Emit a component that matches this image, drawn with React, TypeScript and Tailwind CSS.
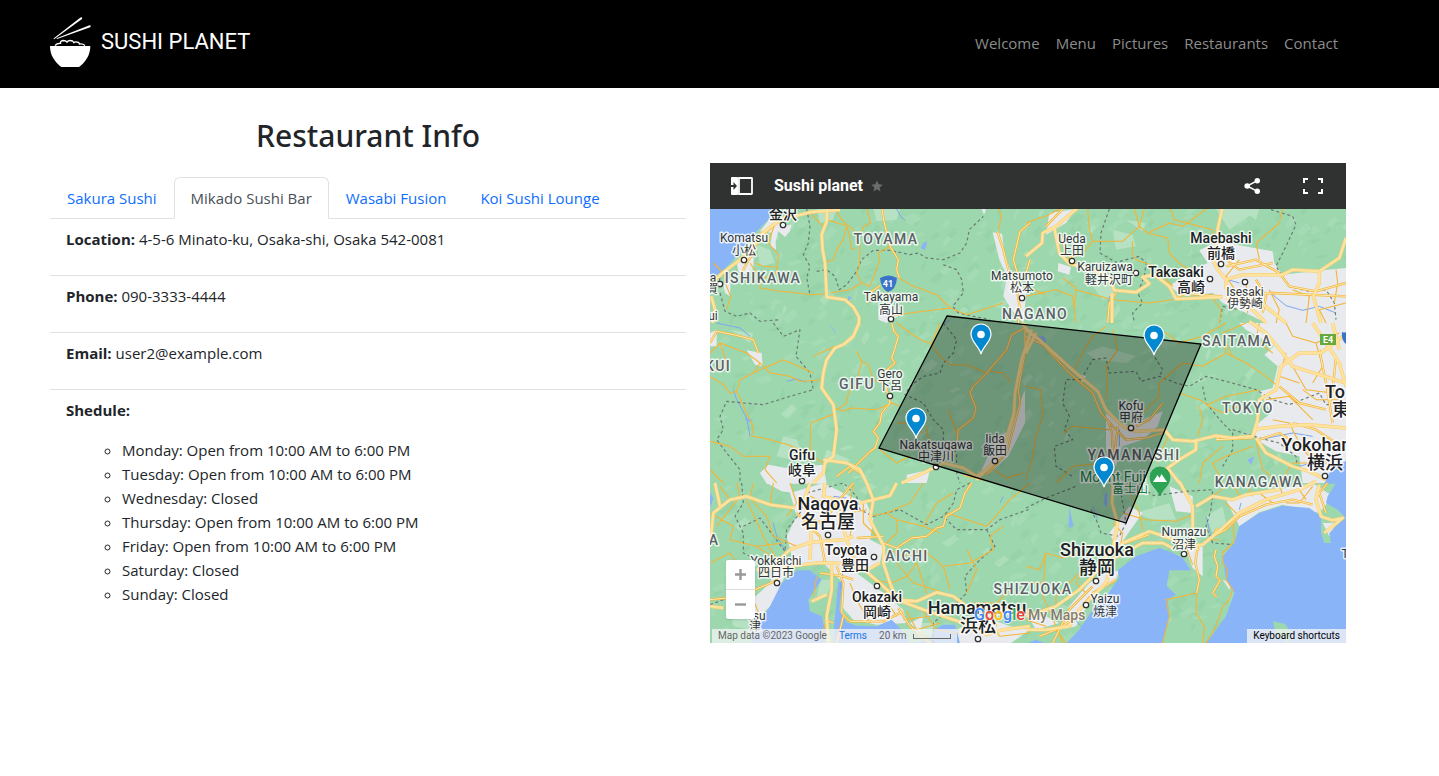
import { useState } from "react";

/* ---------- Map drawing data: each sheet covers 320x160 map units at 3x ---------- */

type Sheet = {
  x: number;
  y: number;
  water: string;
  urban: string;
  pale: string;
  major: string;
  medium: string;
  minor: string;
  border: string;
  river: string;
};

const sheets: Sheet[] = [
  {
    x: 0,
    y: -46,
    water: "M0 130H197L180 165L140 205L100 250L70 290L40 322L0 350ZM640 240L652 235L645 262L632 255ZM415 400L425 402L412 420Z",
    urban:
      "M185 160L215 190L245 185L240 205L225 222L205 205L197 235L198 260L182 250L186 210L150 205ZM100 270L132 285L128 320L110 335L85 325L80 300ZM848 208L876 212L884 275L905 330L890 335L868 290ZM505 430L545 425L565 460L530 480L505 470ZM890 345L950 380L940 480L905 440L880 400ZM40 365L62 350L60 400L45 390ZM812 130L828 140L822 155Z",
    pale: "M320 138L380 138L370 170L330 180ZM490 138L570 138L560 170L500 175ZM140 245L180 260L195 300L150 310Z",
    major:
      "M0 365L40 328L80 298L118 268L148 218L195 182L232 160L260 158L300 148L390 140M352 130L350 175L335 215L338 260L345 300L348 360L350 402L405 410L430 432L447 462L447 482M4 400L15 440L8 480",
    medium:
      "M125 265L160 215L205 175M95 330L110 300L130 270M515 130L522 175L530 210L540 250L565 290L560 320L568 345M470 420L485 385L510 368M862 205L880 260L895 320L920 370L930 440L925 480M960 180L930 205L910 290L925 340M960 290L945 340",
    minor:
      "M205 138L200 170L185 210L175 240L205 275L200 330L150 350L150 375L210 385L245 388L300 395L350 392M300 150L340 190M350 170L400 185L410 190L400 230L380 260L370 290L348 298M380 148L400 175L430 200L450 240L448 310L440 330L455 360L420 380L360 390M470 138L482 180L462 190L450 215M410 190L418 215L425 260L435 255M455 360L480 370L510 290L505 270L540 250M568 345L600 365L680 395L720 435L770 455L880 420M720 435L600 450L545 460M865 138L875 155L865 200M135 300L160 310L200 312M530 375L535 400M120 300L150 345M10 300L40 330L50 370L62 400L50 440",
    border:
      "M290 138L300 190L295 240L280 275L300 310L290 345L300 395M320 325L350 320L375 340L388 380L410 365L440 325L455 290L490 262L540 262L600 275L625 270L650 285L700 290L750 270L770 240L778 200L820 160M700 305L740 320L755 350L760 390L728 430L745 450L800 462L840 470M30 390L45 445L80 460L120 450L150 475L210 470M30 345L25 370",
    river: "M560 138L575 165L585 170M720 470L705 480",
  },
  {
    x: 316,
    y: -46,
    water: "",
    urban:
      "M520 262L565 240L605 240L740 265L745 300L770 335L860 325L960 315V480H720L640 440L590 420L560 390L470 400L430 370L500 320L545 300ZM70 150L150 138L120 180L60 215ZM97 300L135 312L130 335L95 325Z",
    pale: "M260 200L320 215L330 250L270 260ZM300 170L360 180L350 205ZM200 370L250 360L270 400L230 410ZM640 138L700 138L690 170ZM570 138L700 138L610 200Z",
    major:
      "M160 130L90 190L50 210L48 240L0 280M85 195L100 270L130 302L200 320L250 345L265 382L330 388L370 362L350 342L385 335L430 370L450 408L590 402M560 290L575 320L600 350L600 375L660 420L720 480M570 270L575 200L590 130M600 350L650 335L770 335L800 320L880 325L940 285L960 225M880 325L880 360L862 400L885 480M600 405L700 415L780 480M258 390L258 480",
    medium:
      "M600 310L690 290L760 330L790 370L870 385L960 360M105 215L120 270L150 300M60 190L110 138M455 400L480 392L590 400M690 350L720 400L710 450M245 480L250 420L270 390M600 290L640 320L740 300M650 400L740 390L960 400",
    minor:
      "M0 180L40 165L60 160L100 138M185 138L190 200L200 235L290 235L340 190L325 138M340 190L355 140M340 190L365 210L430 180L470 190L540 138M365 210L425 225L430 270L470 310L500 320M200 235L170 270L120 290M0 400L90 380L140 400L150 480M150 380L260 410L370 420L440 410M320 235L318 270L330 290L385 310L440 370M690 240L760 180L770 138M690 240L700 290M435 138L445 170L560 200L565 240M110 345L150 375L145 440M0 370L60 395M800 380L850 400L840 480M660 350L665 450M730 380L760 440L750 480M640 400L600 340L640 290M900 480L880 440L960 420M560 400L570 420L585 440L580 480M930 320L935 360L925 420",
    border:
      "M250 138L225 210L222 270L270 298L340 280L360 300L355 340L335 390L350 420L320 450L325 480M735 140L800 160L810 185L780 250L750 310L790 370L850 385L900 380L925 420L930 470M580 480L590 430L640 440",
    river: "M605 350L640 360M740 395L780 428L830 442L880 430L930 450M250 400L245 470",
  },
  {
    x: 0,
    y: 114,
    water: "M100 285L130 290L118 298ZM355 0L372 20L380 38L362 10Z",
    urban:
      "M150 450L175 425L230 435L340 425L350 482H170ZM110 82L155 90L158 130L135 125ZM860 345L900 320L925 250L945 200L945 300L895 400L840 450L815 440ZM590 455L660 440L650 480H590ZM0 30L20 20L20 70H0Z",
    pale: "M60 20L130 30L120 60ZM350 380L420 410L410 425L340 415ZM220 340L260 350L290 420L200 400Z",
    major:
      "M447 0L430 40L400 65L375 75L350 110L340 150L335 195L370 245L380 320L370 400L345 420L340 450L310 480M340 410L410 420L450 440L470 480M575 480L640 450L700 420L760 435L800 460L835 435M965 20L935 110L915 210L912 270L885 360L840 430L800 470M935 0L960 30",
    medium:
      "M545 0L552 25L565 40L555 75L545 105L555 120L525 145L520 170L530 200L540 240L515 270L510 300L490 325L505 345L495 375L475 390L445 420L415 450M945 15L905 35L890 80L830 150L790 190L780 210L798 255L790 285L745 320L740 365L715 400M0 60L20 25L70 35L130 50L145 90M945 0V90L925 200L930 240L890 390L830 455M380 460L420 430L450 450M760 455L820 470",
    minor:
      "M0 90L30 60L110 90L150 120L130 150L90 170L80 205L60 210L40 185L0 160M150 120L180 150L240 160L270 175L330 172M80 205L110 270L130 310L125 340L160 345L235 365L300 395M300 395L302 300L380 270M380 255L400 265L425 255L500 260L545 240L570 250M440 85L455 115L440 180L415 210L410 240L380 260M455 115L475 125L490 170L520 180M560 0L600 30L640 55L660 60L690 100L720 125L770 125L830 150M650 310L655 350L670 385M560 300L600 300L640 330M0 355L60 370L100 400L180 400L165 440L200 480M840 145L880 150L905 180M30 60L50 120L0 145M310 100L375 70M130 150L220 110L310 150M510 380L560 420L600 400M740 330L715 260M0 440L40 480M300 395L340 420M850 440L890 465L940 450M690 0L665 60",
    border:
      "M190 0L220 40L270 20L258 100L300 150L310 200L240 220L160 245L100 240L50 235L30 280L40 320L20 350L50 390L90 440L90 480M700 0L740 50L730 90L700 120L690 150L640 160L600 190L585 215L640 240L670 290L700 320L700 350L740 390L740 450L750 480",
    river: "M230 175L260 168L290 178M20 0L90 15L120 40M70 200L80 230L110 285L120 340",
  },
  {
    x: 316,
    y: 114,
    water: "M895 482L910 450L935 430L965 410V482ZM0 40L55 40L60 60L40 65ZM665 410L685 400L675 425Z",
    urban:
      "M640 0H960V430L920 450L900 480H830L820 400L750 385L690 350L685 310L735 270L700 205L740 195L755 130L715 95L745 70L660 20ZM240 270L265 290L310 310L350 290L410 265L395 310L350 350L290 370L270 430L240 380ZM150 150L180 160L170 180Z",
    pale: "M720 60L770 40L780 90L735 95ZM750 230L800 240L780 260L750 255ZM180 90L230 70L330 100L300 120L210 110Z",
    major:
      "M0 20L40 50L100 105L150 150L215 205L240 260L290 310L330 325L415 320L440 350L500 355L570 338L620 345L680 340L690 318L760 310L850 305L960 315M680 340L695 290L700 230L750 200L765 130L820 90L885 90L965 30M670 -5L720 30L770 90L800 130L960 180M510 350L510 380L460 410L425 435L460 480M690 345L720 390L800 430L850 445L900 470M940 80L920 0M860 0L900 60L940 120L960 190M0 90L30 30",
    medium:
      "M0 40L50 65L130 150L200 210L225 270L270 320L300 350L360 345L410 330M245 290L258 330L260 400L262 480M275 310L265 400M330 310L370 290L410 240M570 350L680 345M700 350L760 330L840 380L900 420M800 300L870 320L960 380M760 190L820 240L900 260M560 335L580 350M880 80L900 180L920 300M930 100L920 200L910 250",
    minor:
      "M0 190L45 200L50 280L30 340L20 400L0 470M140 150L180 70L200 40L240 10M260 20L275 80L240 130L245 170L240 230M300 320L400 220L400 180L470 120L530 130M390 10L460 60L530 40L600 0M530 130L600 90L660 120L720 160L750 185M600 90L590 30L660 0M460 210L520 230L545 245L600 220L650 210L700 200M520 250L530 290L515 340M540 245L590 270L640 250M430 330L400 400L395 420M620 100L600 60M780 90L760 160L820 180M780 0L800 40L870 60L940 30M800 130L840 200L920 210M720 230L790 220L860 290M740 290L790 300L830 380L890 440M690 350L710 440L760 480M590 480L560 420L600 400L680 370M760 480L800 420L860 420M890 160L910 160M700 0L690 50L740 90M110 330L140 310L250 320M90 480L140 430L230 420M830 200L870 230L940 230M870 60L890 130L860 180M520 480L530 420L590 370",
    border:
      "M165 170L200 110L240 105L250 150L330 145L345 175L400 160L450 180L490 190L540 160L600 175L690 200L740 230L790 245L880 210L900 245L950 240M530 190L540 240L590 300L620 330L620 380L590 430M165 170L120 170L110 240L130 280L115 320L140 350L85 370L90 430L140 460M620 320L700 345L760 360L810 400L815 440M380 70L385 100L410 140L400 160",
    river: "M700 350L800 330L860 340M280 320V370M820 430L890 410",
  },
  {
    x: 0,
    y: 274,
    water:
      "M215 300L262 262L300 262L335 290L315 320L295 350L300 385L335 400L345 440L345 482H120L150 420L180 370ZM385 295L398 300L392 345L388 380L410 418L440 428L500 430L545 410L575 440L600 482H370L372 430L378 370ZM670 440L700 425L735 425L750 482H590L660 470ZM0 30L10 45L0 75Z",
    urban:
      "M240 30L340 0L420 40L470 60L490 110L480 170L520 190L510 240L440 270L520 330L580 380L590 420L500 425L430 410L395 370L400 300L340 240L250 240L230 160L260 100ZM200 230L245 235L215 300L190 360L150 400L140 440L125 350L180 300ZM740 440L820 400L900 430L960 440L900 482H750ZM600 420L640 400L630 450ZM170 0L240 0L250 30L215 25Z",
    pale: "M330 290L370 290L350 340L320 350ZM400 0L430 20L410 40ZM60 380L120 390L120 440L70 430ZM620 420L680 420L660 460L620 450ZM440 400L520 400L540 410L430 415Z",
    major:
      "M0 190L10 90L60 50L110 40L180 65L255 75M15 0L30 70M300 0L280 60L305 110L300 230M160 275L240 200L300 178L400 170L430 160M140 260L240 250L320 240L380 240L470 262L510 240M395 120L420 200L440 240L520 310L560 350L640 380L700 400L760 420L830 455L880 440L960 430M365 240L365 320L350 400L355 480M470 0L490 50L480 110L522 190L520 240L540 300L560 350L620 355L680 328L730 340L770 370L960 385M450 60L540 38L560 0M305 355L350 335M0 370L40 375M345 0L340 40L420 60",
    medium:
      "M520 180L560 195L605 165L650 160L680 135L700 130L708 100L750 75L765 30L785 0M345 410L370 420M300 110L340 120L380 60L430 0M440 165L520 160M430 290L400 280L330 270M565 375L600 430L660 480M120 370L135 320L205 290M380 250L400 300L395 390L420 415L520 415L580 385M0 350L50 345M260 90L330 160L345 240M380 480L400 400",
    minor:
      "M30 10L60 50M130 0L120 45L170 100L190 160L260 190M0 90L70 130L60 170L140 190L200 230M110 50L160 160L200 230M480 100L530 90L560 110L560 150L530 180M530 90L600 60L640 0M560 110L640 130L690 150M640 130L680 60L730 30M710 90L830 130L900 50L960 0M540 200L580 220L640 200L700 250L720 320M545 300L590 280L620 240M700 250L780 240L850 200L840 160L880 130M770 200L800 260L770 330M640 385L680 440L740 450M590 385L620 440L690 420M430 100L420 160M420 60L430 0M440 240L490 290L540 300M460 60L460 120L520 180M240 0L260 60L230 100M190 0L180 65M0 240L60 210L100 270M140 190L220 180M300 40L390 80L400 140M360 100L470 80M540 300L520 340L560 400M620 240L650 330M850 390L860 430M900 320L860 360L790 360M560 240L610 300L690 325M480 420L440 350L420 300M350 410L330 470M580 410L660 400M80 0L90 40L20 130M130 350L150 400L130 440M320 280L310 340M820 400L870 460L960 450",
    border:
      "M95 0L100 60L75 100L100 150L100 210L140 230M100 130L150 105L180 145L225 205L230 140L270 90L290 30L400 0L440 40L450 80L490 100L570 80L650 125L700 100L740 140L830 140L870 110L960 78M780 0L740 20L730 60L705 95M830 140L855 190L800 240L765 280L770 330L750 350M0 365L40 350M670 480L670 420L750 350",
    river: "M190 120L200 160L225 200M400 260L390 320M880 40L870 60M370 40L410 45",
  },
  {
    x: 316,
    y: 274,
    water:
      "M120 482L160 440L200 380L240 340L280 285L275 262L330 220L400 195L440 210L470 225L495 262L430 262L422 310L450 335L425 350L430 400L410 482ZM540 482L600 400L625 330L600 290L590 220L625 180L640 130L700 90L770 68L850 75L885 100L885 150L895 180L915 180L910 150L940 120L960 105L935 80L900 60L905 40L930 0H962V482ZM0 482L30 470L60 482ZM130 70L142 130L128 135ZM237 30L245 30L242 75L233 60Z",
    urban:
      "M310 70L350 90L300 160L275 200L250 150ZM430 10L500 40L500 90L450 85ZM190 300L240 270L280 262L270 290L200 340L150 430L100 440L130 370ZM480 200L530 190L530 280L500 255ZM600 50L700 30L860 0L920 40L880 90L770 65L700 88L640 130ZM890 120L930 120L910 160ZM590 290L620 300L610 320ZM0 390L60 400L100 420L30 440Z",
    pale: "M330 90L430 60L450 110L380 110ZM540 100L590 70L600 120L560 150ZM710 0L780 0L740 40ZM450 230L490 250L440 262Z",
    major:
      "M262 -5L258 60L275 120L262 190L200 280L160 320L90 370L0 400M255 215L290 180L370 145L430 165L480 190L530 185L590 135L640 90L720 50L820 20L870 -5M0 440L60 440L130 430L160 380L240 300L265 225L350 180L410 180L440 195M500 180L500 70L460 -5M510 70L560 40L620 50L660 35L760 20M880 5L870 50L885 100L920 112L950 105L895 150",
    medium:
      "M515 190L508 240L520 290L512 330M490 190L520 200M570 200L565 220L575 250L570 280L582 292L560 330L572 342M575 135L560 160L600 140L640 100L720 65L800 50L860 65M40 460L90 440L140 410L200 330L270 290M905 0L880 30L900 90M300 180L370 155M80 480L130 380L200 310",
    minor:
      "M512 330L510 390L535 430L530 480M512 330L420 350L430 400L410 480M620 100L625 175L590 210L590 240L605 260L600 290L620 320L610 350L590 370L570 430L540 480M290 90L360 110L450 115L500 95M300 0L340 90L350 140M0 250L40 260L60 210L110 225L160 210M60 210L50 340L70 380L110 480M260 120L290 150L285 180M0 300L60 300M90 370L90 340L170 260L200 220M600 60L640 100M660 0L680 40M700 30L740 60M820 20L840 50M760 0L770 40M0 410L60 430M90 440L120 480M480 190L500 245M525 190L540 170L580 170M640 40L620 0M860 10L820 60L780 60M560 40L600 10M180 330L150 300L160 280",
    border:
      "M0 75L60 45L150 10M195 80L215 120L225 150L280 160L300 120L280 0M335 10L385 38L480 25L560 20L555 80L540 130L560 180L620 185",
    river: "M140 400L165 430M540 100L560 180M200 70L215 110M645 60L640 80",
  },
];

/* Small hillshade facets, spread over the land by a seeded generator. */
function hillshade(count: number, seed: number) {
  let s = seed;
  const next = () => {
    s = (s * 16807) % 2147483647;
    return s / 2147483647;
  };
  let d = "";
  for (let i = 0; i < count; i++) {
    const x = Math.round(next() * 636);
    const y = Math.round(next() * 434);
    const w = 3 + Math.round(next() * 9);
    const h = 2 + Math.round(next() * 8);
    d += `M${x} ${y}l${w} ${-h}l${Math.round(w / 2)} ${Math.round(h / 2)}l${-w} ${h}z`;
  }
  return d;
}

const litSlopes = hillshade(420, 4711);
const darkSlopes = hillshade(420, 977);
const openLand = hillshade(70, 31337);

type Label = [text: string, x: number, y: number];

const regions: Label[] = [
  ["TOYAMA", 176, 35],
  ["ISHIKAWA", 53, 74],
  ["NAGANO", 325, 110],
  ["GIFU", 147, 180],
  ["SAITAMA", 527, 137],
  ["TOKYO", 538, 204],
  ["YAMANASHI", 424, 251],
  ["KANAGAWA", 549, 278],
  ["AICHI", 197, 352],
  ["SHIZUOKA", 323, 385],
  ["KUI", 8, 162],
  ["A", 4, 336],
];

const towns: Label[] = [
  ["Komatsu", 34, 33],
  ["小松", 34, 46],
  ["Takayama", 181, 92],
  ["高山", 181, 105],
  ["Matsumoto", 312, 71],
  ["松本", 312, 83],
  ["Ueda", 362, 34],
  ["上田", 362, 46],
  ["Karuizawa", 395, 62],
  ["軽井沢町", 399, 75],
  ["Isesaki", 535, 87],
  ["伊勢崎", 535, 99],
  ["Gero", 180, 169],
  ["下呂", 180, 181],
  ["Nakatsugawa", 226, 240],
  ["中津川", 226, 252],
  ["Iida", 285, 234],
  ["飯田", 285, 246],
  ["Kofu", 421, 201],
  ["甲府", 421, 213],
  ["Numazu", 474, 327],
  ["沼津", 474, 340],
  ["Yokkaichi", 66, 356],
  ["四日市", 66, 368],
  ["Yaizu", 395, 394],
  ["焼津", 395, 407],
  ["Tsu", 46, 411],
  ["津", 45, 422],
  ["ui", 3, 111],
  ["a", 3, 73],
  ["賀", 2, 84],
  ["T", 635, 349],
];

const cities: Label[] = [
  ["金沢", 73, 10],
  ["Maebashi", 511, 34],
  ["前橋", 511, 49],
  ["Takasaki", 466, 68],
  ["高崎", 481, 83],
  ["Gifu", 92, 251],
  ["岐阜", 92, 266],
  ["Toyota", 136, 346],
  ["豊田", 145, 361],
  ["Okazaki", 167, 393],
  ["岡崎", 167, 408],
];

const capitals: Label[] = [
  ["Nagoya", 118, 301],
  ["名古屋", 118, 319],
  ["Shizuoka", 387, 347],
  ["静岡", 387, 365],
  ["Hamamatsu", 267, 405],
  ["浜松", 268, 423],
  ["To", 625, 189],
  ["東", 631, 207],
  ["Yokohama", 614, 242],
  ["横浜", 615, 260],
];

const townDots: [number, number][] = [
  [73, 16], [34, 51], [10, 75], [181, 110], [312, 89], [362, 52], [426, 64],
  [511, 55], [500, 70], [535, 73], [180, 187], [226, 258], [285, 252],
  [421, 219], [92, 272], [118, 326], [164, 348], [167, 377], [67, 374],
  [268, 430], [386, 372], [376, 396], [474, 345], [615, 267],
];

const pins: [number, number][] = [
  [271, 145],
  [444, 146],
  [206, 229],
  [394, 278],
];

function Labels({ items, className }: { items: Label[]; className: string }) {
  return (
    <g
      className={`font-['Roboto','Noto_Sans_CJK_JP',sans-serif] ${className}`}
      textAnchor="middle"
      paintOrder="stroke"
      stroke="#fff"
      strokeOpacity="0.8"
      strokeWidth="3"
      strokeLinejoin="round"
    >
      {items.map(([text, x, y]) => (
        <text key={text + x} x={x} y={y}>
          {text}
        </text>
      ))}
    </g>
  );
}

function Layer({ part, ...style }: { part: keyof Sheet } & React.SVGProps<SVGGElement>) {
  return (
    <g strokeLinejoin="round" {...style}>
      {sheets.map((sheet) => (
        <path
          key={`${sheet.x},${sheet.y}`}
          transform={`translate(${sheet.x} ${sheet.y}) scale(0.33333)`}
          d={String(sheet[part])}
        />
      ))}
    </g>
  );
}

function MapCanvas() {
  return (
    <svg
      viewBox="0 0 636 434"
      preserveAspectRatio="xMidYMid slice"
      className="block h-full w-full"
      role="img"
      aria-label="Map of central Japan"
    >
      <rect width="636" height="434" fill="#9dd7ae" />
      <path d={darkSlopes} fill="#90cea2" opacity="0.45" />
      <path d={litSlopes} fill="#b2e0bd" opacity="0.4" />
      <path d={openLand} fill="#c8ebd1" opacity="0.35" />
      <Layer part="pale" fill="#b6e1c2" />
      <Layer part="urban" fill="#e8eaed" />
      <Layer part="water" fill="#8ab4f8" />
      <path d="M563 412L575 415L580 422L579 434L566 426Z" fill="#9dd7ae" />
      <Layer part="river" fill="none" stroke="#7ba7ef" strokeWidth="3" />
      <Layer part="border" fill="none" stroke="#6b7a72" strokeWidth="3.5" strokeDasharray="9 8" />
      <Layer part="minor" fill="none" stroke="#f5b433" strokeWidth="3.2" />
      <Layer part="medium" fill="none" stroke="#f5b433" strokeWidth="7" />
      <Layer part="medium" fill="none" stroke="#fdebb8" strokeWidth="3" />
      <Layer part="major" fill="none" stroke="#f9cd6b" strokeWidth="10.5" />
      <Layer part="major" fill="none" stroke="#fee29f" strokeWidth="7.5" />

      <g fill="#fff" stroke="#333" strokeWidth="1.3">
        {townDots.map(([x, y]) => (
          <circle key={`${x}-${y}`} cx={x} cy={y} r="2.7" />
        ))}
      </g>

      <Labels items={regions} className="fill-[#5a6166] text-sm font-medium tracking-widest" />
      <Labels items={towns} className="fill-[#33373b] text-xs" />
      <Labels items={cities} className="fill-[#202124] text-sm font-medium" />
      <Labels items={capitals} className="fill-[#202124] text-lg font-medium" />
      <Labels items={[["Mount Fuji", 403, 273]]} className="fill-[#188048] text-sm" />
      <Labels items={[["富士山", 420, 284]]} className="fill-[#188048] text-xs" />

      <path d="M170 69q9-5 17 0q-1 12-9 14q-7-3-8-14z" fill="#3b73c8" />
      <text x="178" y="78" textAnchor="middle" fill="#fff" className="font-['Roboto',sans-serif] text-[9px] font-bold">41</text>
      <rect x="610" y="125" width="16" height="11" fill="#68a93b" />
      <text x="618" y="134" textAnchor="middle" fill="#fff" className="font-['Roboto',sans-serif] text-[9px] font-bold">E4</text>
      <path d="M632 123q3 1 4 0v12q-5-4-4-12z" fill="#3b73c8" />

      <path d="M450 287c-3-8-10-10-10-19a10 10 0 0 1 20 0c0 9-7 11-10 19z" fill="#2fa355" stroke="#1f8a45" strokeWidth="0.6" />
      <path d="M443 273l4.500-7l2 3l2-4l5.500 8z" fill="#fff" />

      <path d="M237 107L491 135L416 314L169 239Z" fill="#000" fillOpacity="0.3" stroke="#000" strokeWidth="1.3" />

      {pins.map(([x, y]) => (
        <g key={`${x}-${y}`} transform={`translate(${x} ${y})`}>
          <path
            d="M0 0C-2-8-10-12-10-20a10 10 0 0 1 20 0C10-12 2-8 0 0z"
            fill="#0288d1"
            stroke="#fff"
            strokeWidth="1.2"
          />
          <circle cy="-19.500" r="3.800" fill="#fff" />
        </g>
      ))}

      <g
        className="font-['Roboto',sans-serif] text-base font-medium"
        paintOrder="stroke"
        stroke="#fff"
        strokeOpacity="0.7"
        strokeWidth="2"
      >
        <text x="264" y="411">
          <tspan fill="#4285f4">G</tspan>
          <tspan fill="#ea4335">o</tspan>
          <tspan fill="#fbbc05">o</tspan>
          <tspan fill="#4285f4">g</tspan>
          <tspan fill="#34a853">l</tspan>
          <tspan fill="#ea4335">e</tspan>
        </text>
        <text x="318" y="411" fill="#857f6c" className="text-sm font-medium">
          My Maps
        </text>
      </g>
    </svg>
  );
}

/* ---------- Map panel ---------- */

function MapPanel() {
  return (
    <section aria-label="Sushi planet map" className="flex h-[480px] flex-col font-['Roboto',sans-serif]">
      <div className="flex h-[46px] shrink-0 items-center bg-[#303131] pr-[23px] pl-[21px] text-white">
        <button type="button" aria-label="Show legend">
          <svg width="22" height="18" viewBox="0 0 22 18" className="block">
            <rect x="0" y="0" width="7" height="18" rx="1" fill="#fff" />
            <path d="M0 8h2.500V5l3.500 4l-3.500 4v-3H0z" fill="#303131" />
            <path d="M8 1h12.500q.5 0 .5.500v15q0 .5-.5.500H8z" fill="none" stroke="#fff" strokeWidth="1.8" />
          </svg>
        </button>
        <h2 className="ml-[21px] text-base font-bold">Sushi planet</h2>
        <button type="button" aria-label="Star this map" className="ml-2">
          <svg width="12" height="12" viewBox="0 0 24 24" className="block" fill="#6c6c6c">
            <path d="M12 1l3.200 7.700l8.300.7l-6.300 5.400l1.900 8.100L12 18.600l-7.100 4.300l1.900-8.100L.5 9.400l8.300-.7z" />
          </svg>
        </button>
        <button type="button" aria-label="Share" className="ml-auto">
          <svg width="17" height="16" viewBox="0 0 17 16" className="block">
            <path d="M13.500 2.700L3 8l10.500 5.300" fill="none" stroke="#fff" strokeWidth="1.500" />
            <circle cx="3.200" cy="8" r="2.800" fill="#fff" />
            <circle cx="13.300" cy="2.800" r="2.700" fill="#fff" />
            <circle cx="13.300" cy="13.200" r="2.700" fill="#fff" />
          </svg>
        </button>
        <button type="button" aria-label="Full screen" className="ml-[42px]">
          <svg width="20" height="16" viewBox="0 0 20 16" className="block" fill="none" stroke="#fff" strokeWidth="2">
            <path d="M1 5V1h4M15 1h4v4M19 11v4h-4M5 15H1v-4" />
          </svg>
        </button>
      </div>

      <div className="relative min-h-0 flex-1 overflow-hidden">
        <MapCanvas />
        <div className="absolute bottom-6 left-4 flex flex-col rounded-xs bg-white shadow">
          <button type="button" aria-label="Zoom in" className="flex h-[29px] w-[29px] items-center justify-center">
            <svg width="11" height="11" viewBox="0 0 11 11" stroke="#999" strokeWidth="2.400">
              <path d="M0 5.500h11M5.500 0v11" />
            </svg>
          </button>
          <button type="button" aria-label="Zoom out" className="flex h-[30px] w-[29px] items-center justify-center border-t border-[#dcdcdc]">
            <svg width="11" height="11" viewBox="0 0 11 11" stroke="#999" strokeWidth="2.400">
              <path d="M0 5.500h11" />
            </svg>
          </button>
        </div>
        <div className="absolute bottom-0 left-0.5 flex h-[14px] items-center gap-3 bg-[#f5f5f5]/75 px-1.5 text-[10px] leading-[14px] text-[#666]">
          <span>Map data ©2023 Google</span>
          <a href="#terms" className="text-[#1a73e8]">Terms</a>
          <span className="flex items-center gap-1.5">
            20 km
            <span className="h-[5px] w-[38px] border-x border-b border-[#666]" />
          </span>
        </div>
        <button type="button" className="absolute right-0 bottom-0 h-[14px] bg-[#f5f5f5]/75 px-1.5 text-[10px] leading-[14px] text-black">
          Keyboard shortcuts
        </button>
      </div>
    </section>
  );
}

/* ---------- Page ---------- */

const links = ["Welcome", "Menu", "Pictures", "Restaurants", "Contact"];
const restaurants = ["Sakura Sushi", "Mikado Sushi Bar", "Wasabi Fusion", "Koi Sushi Lounge"];
const details = [
  ["Location:", "4-5-6 Minato-ku, Osaka-shi, Osaka 542-0081"],
  ["Phone:", "090-3333-4444"],
  ["Email:", "user2@example.com"],
];
const schedule = [
  "Monday: Open from 10:00 AM to 6:00 PM",
  "Tuesday: Open from 10:00 AM to 6:00 PM",
  "Wednesday: Closed",
  "Thursday: Open from 10:00 AM to 6:00 PM",
  "Friday: Open from 10:00 AM to 6:00 PM",
  "Saturday: Closed",
  "Sunday: Closed",
];

function Logo() {
  return (
    <a href="#welcome" className="flex items-center gap-2.5 text-white">
      <svg width="41" height="50" viewBox="0 0 41 50" fill="#fff">
        <path d="M0 29h40.300c0 9-4.300 15.500-11.300 21H11.300C4.300 44.500 0 38 0 29z" />
        <path d="M3.500 21.500L30.500.5q2.200-.6 1.500 1.400L4 22.200z" />
        <path d="M6.500 21.200L39.500 8.200q2.200.2.700 2.100L7 22z" />
        <path
          d="M5 28.500q2-2.500 5.500-2.300q-.5-2 2.500-2.700q3 0 4 1.500q2-2.500 5.500-1q1.500 1 1 2q2-2 5-.5q1 .8 1 1.500q3-.5 5.500 1.500"
          fill="none"
          stroke="#fff"
          strokeWidth="1.400"
        />
      </svg>
      <span className="font-['Roboto',sans-serif] text-[22px] leading-8">SUSHI PLANET</span>
    </a>
  );
}

export default function App() {
  const [active, setActive] = useState(1);

  return (
    <div className="min-h-screen bg-white font-['Open_Sans',sans-serif] text-[15px] leading-6 text-[#212529]">
      <header className="flex h-[88px] items-center justify-between bg-black pr-[93px] pb-1 pl-[50px]">
        <Logo />
        <nav aria-label="Main" className="flex pt-0.5">
          {links.map((link) => (
            <a key={link} href={`#${link.toLowerCase()}`} className="px-2 py-2 text-[#8c8c8c]">
              {link}
            </a>
          ))}
        </nav>
      </header>

      <main className="grid grid-cols-2 items-start gap-6 pr-[93px] pl-[50px]">
        <section className="pt-7">
          <h1 className="mb-[22px] text-center font-['Noto_Sans','Open_Sans',sans-serif] text-3xl leading-[39px] font-medium">
            Restaurant Info
          </h1>
          <div role="tablist" className="flex border-b border-[#dee2e6]">
            {restaurants.map((name, i) => (
              <button
                key={name}
                type="button"
                role="tab"
                aria-selected={i === active}
                onClick={() => setActive(i)}
                className={
                  i === active
                    ? "-mb-px rounded-t-md border border-[#dee2e6] border-b-white bg-white px-4 py-2 text-[#495057]"
                    : "-mb-px border border-transparent px-4 py-2 text-[#0d6efd]"
                }
              >
                {name}
              </button>
            ))}
          </div>
          <div role="tabpanel">
            {details.map(([term, value]) => (
              <p key={term} className="border-b border-[#dee2e6] px-4 pt-2 pb-6">
                <strong>{term}</strong> {value}
              </p>
            ))}
            <div className="px-4 pt-2">
              <p className="mb-4">
                <strong>Shedule:</strong>
              </p>
              <ul className="list-[circle] pl-14">
                {schedule.map((line) => (
                  <li key={line}>{line}</li>
                ))}
              </ul>
            </div>
          </div>
        </section>

        <div className="pt-[75px]">
          <MapPanel />
        </div>
      </main>
    </div>
  );
}
